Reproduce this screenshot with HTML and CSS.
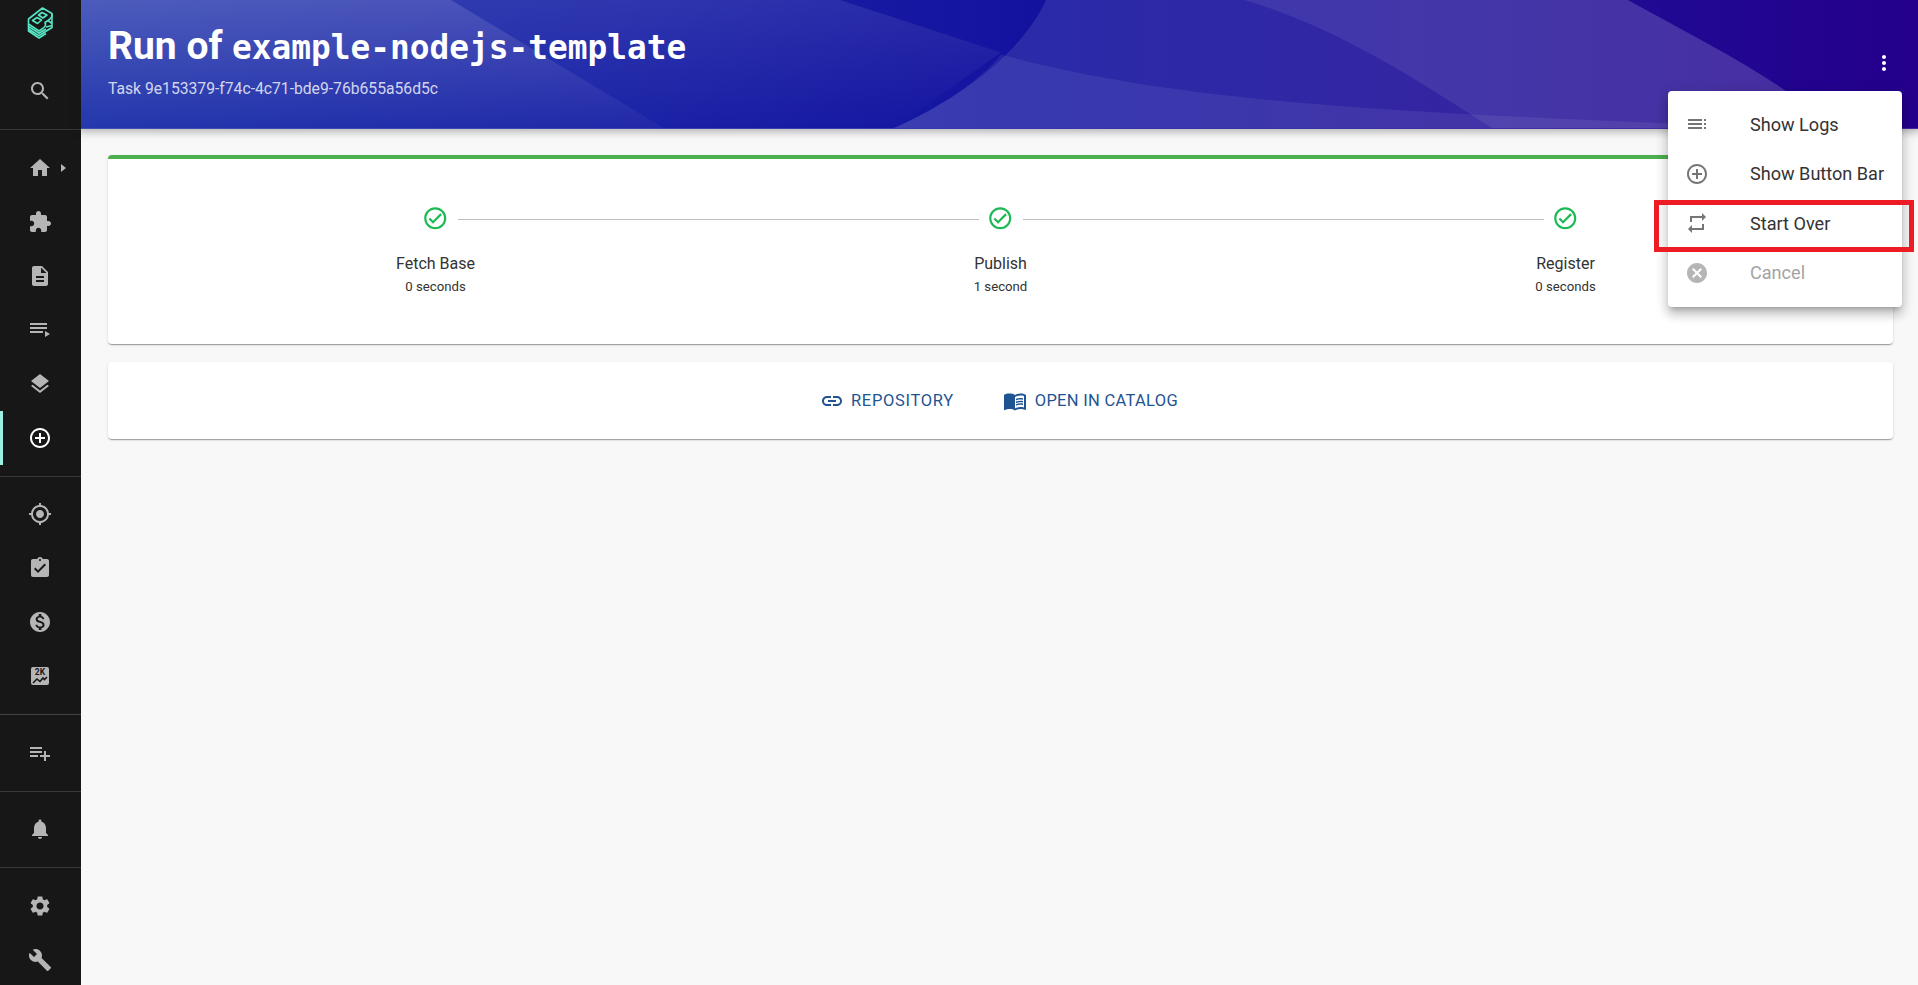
FILE: index.html
```html
<!DOCTYPE html>
<html lang="en">
<head>
  <meta charset="UTF-8">
  <title>Run of example-nodejs-template</title>
  <link rel="stylesheet" href="styles.css">
</head>
<body>
  <nav class="sidebar">
    <div class="logo">
      <svg width="27" height="33" viewBox="26 6 27 33" fill="none" stroke="#57e5c5" stroke-width="1.6" stroke-linejoin="round">
        <path d="M27.5 19 L41.5 8 L51 13.5 Q52 17 47 20.5 L44 22.5 Q46 26 41 29 L38 31 L27.5 24 Z"/>
        <path d="M37.5 15 L41 12.5 L46 15 L42 18 Z M31.5 20.5 L36 17.5 L40.5 20 L36.5 23.5 Z"/>
        <path d="M27.5 24 V31 L38 38 L45 33.5 M27.5 26.5 L38 33.2 L45 29 M27.5 29 L38 35.6 L45 31.3"/>
        <path d="M51 14 V27.5 L45 31.3 M47 20.5 L51 23.5 M45 27 L51 25.5"/>
      </svg>
    </div>
    <a class="nav-item"><svg viewBox="0 0 24 24"><path d="M15.5 14h-.79l-.28-.27C15.41 12.59 16 11.11 16 9.5 16 5.91 13.09 3 9.5 3S3 5.91 3 9.5 5.91 16 9.5 16c1.61 0 3.09-.59 4.23-1.57l.27.28v.79l5 4.99L20.49 19l-4.99-5zm-6 0C7.01 14 5 11.99 5 9.5S7.01 5 9.5 5 14 7.01 14 9.5 11.99 14 9.5 14z"/></svg></a>
    <div class="divider"></div>
    <a class="nav-item"><svg viewBox="0 0 24 24"><path d="M10 20v-6h4v6h5v-8h3L12 3 2 12h3v8z"/></svg><span class="caret"></span></a>
    <a class="nav-item"><svg viewBox="0 0 24 24"><path d="M20.5 11H19V7c0-1.1-.9-2-2-2h-4V3.5C13 2.12 11.88 1 10.5 1S8 2.12 8 3.5V5H4c-1.1 0-1.99.9-1.99 2v3.8H3.5c1.49 0 2.7 1.21 2.7 2.7s-1.21 2.7-2.7 2.7H2V20c0 1.1.9 2 2 2h3.8v-1.5c0-1.49 1.21-2.7 2.7-2.7 1.49 0 2.7 1.21 2.7 2.7V22H17c1.1 0 2-.9 2-2v-4h1.5c1.38 0 2.5-1.12 2.5-2.5S21.88 11 20.5 11z"/></svg></a>
    <a class="nav-item"><svg viewBox="0 0 24 24"><path d="M14 2H6c-1.1 0-1.99.9-1.99 2L4 20c0 1.1.89 2 1.99 2H18c1.1 0 2-.9 2-2V8l-6-6zm2 16H8v-2h8v2zm0-4H8v-2h8v2zm-3-5V3.5L18.5 9H13z"/></svg></a>
    <a class="nav-item"><svg viewBox="0 0 24 24"><path d="M19 9H2v2h17V9zm0-4H2v2h17V5zM2 15h13v-2H2v2zm15-2v6l5-3-5-3z"/></svg></a>
    <a class="nav-item"><svg viewBox="0 0 24 24"><path d="M11.99 18.54l-7.37-5.73L3 14.07l9 7 9-7-1.63-1.27-7.38 5.74zM12 16l7.36-5.73L21 9l-9-7-9 7 1.63 1.27L12 16z"/></svg></a>
    <a class="nav-item active"><svg viewBox="0 0 24 24"><path d="M13 7h-2v4H7v2h4v4h2v-4h4v-2h-4V7zm-1-5C6.48 2 2 6.48 2 12s4.48 10 10 10 10-4.48 10-10S17.52 2 12 2zm0 18c-4.41 0-8-3.59-8-8s3.59-8 8-8 8 3.59 8 8-3.59 8-8 8z"/></svg></a>
    <div class="divider tight"></div>
    <a class="nav-item"><svg viewBox="0 0 24 24"><path d="M12 8c-2.21 0-4 1.79-4 4s1.79 4 4 4 4-1.79 4-4-1.79-4-4-4zm8.94 3c-.46-4.17-3.77-7.48-7.94-7.94V1h-2v2.06C6.83 3.52 3.52 6.83 3.06 11H1v2h2.06c.46 4.17 3.77 7.48 7.94 7.94V23h2v-2.06c4.17-.46 7.48-3.77 7.94-7.94H23v-2h-2.06zM12 19c-3.87 0-7-3.13-7-7s3.13-7 7-7 7 3.13 7 7-3.13 7-7 7z"/></svg></a>
    <a class="nav-item"><svg viewBox="0 0 24 24"><path d="M19 3h-4.18C14.4 1.84 13.3 1 12 1c-1.3 0-2.4.84-2.82 2H5c-1.1 0-2 .9-2 2v14c0 1.1.9 2 2 2h14c1.1 0 2-.9 2-2V5c0-1.1-.9-2-2-2zm-7 0c.55 0 1 .45 1 1s-.45 1-1 1-1-.45-1-1 .45-1 1-1zm-2 14l-4-4 1.41-1.41L10 14.17l6.59-6.59L18 9l-8 8z"/></svg></a>
    <a class="nav-item"><svg viewBox="0 0 24 24"><path d="M12 2C6.48 2 2 6.48 2 12s4.48 10 10 10 10-4.48 10-10S17.52 2 12 2zm1.41 16.09V20h-2.67v-1.93c-1.71-.36-3.16-1.46-3.27-3.4h1.96c.1 1.05.82 1.87 2.65 1.87 1.96 0 2.4-.98 2.4-1.59 0-.83-.44-1.61-2.67-2.14-2.48-.6-4.18-1.62-4.18-3.67 0-1.72 1.39-2.84 3.11-3.21V4h2.67v1.95c1.86.45 2.79 1.86 2.85 3.39H14.3c-.05-1.11-.64-1.87-2.22-1.87-1.5 0-2.4.68-2.4 1.64 0 .84.65 1.39 2.67 1.91s4.18 1.39 4.18 3.91c-.01 1.83-1.38 2.83-3.12 3.16z"/></svg></a>
    <a class="nav-item"><svg viewBox="0 0 24 24"><rect x="3" y="3" width="18" height="18" rx="2"/><text class="score-text" x="12" y="11">2K</text><path class="score-line" d="M5 19l4-4 3 2.5 3-3.5 1.5 1.5L19 13"/></svg></a>
    <div class="divider thick"></div>
    <a class="nav-item"><svg viewBox="0 0 24 24"><path d="M14 10H2v2h12v-2zm0-4H2v2h12V6zm4 8v-4h-2v4h-4v2h4v4h2v-4h4v-2h-4zM2 16h8v-2H2v2z"/></svg></a>
    <div class="divider tight"></div>
    <a class="nav-item"><svg viewBox="0 0 24 24"><path d="M12 22c1.1 0 2-.9 2-2h-4c0 1.1.89 2 2 2zm6-6v-5c0-3.07-1.64-5.64-4.5-6.32V4c0-.83-.67-1.5-1.5-1.5s-1.5.67-1.5 1.5v.68C7.63 5.36 6 7.92 6 11v5l-2 2v1h16v-1l-2-2z"/></svg></a>
    <div class="divider"></div>
    <a class="nav-item"><svg viewBox="0 0 24 24"><path d="M19.14 12.94c.04-.3.06-.61.06-.94 0-.32-.02-.64-.07-.94l2.03-1.58c.18-.14.23-.41.12-.61l-1.92-3.32c-.12-.22-.37-.29-.59-.22l-2.39.96c-.5-.38-1.03-.7-1.62-.94l-.36-2.54c-.04-.24-.24-.41-.48-.41h-3.84c-.24 0-.43.17-.47.41l-.36 2.54c-.59.24-1.13.57-1.62.94l-2.39-.96c-.22-.08-.47 0-.59.22L2.74 8.87c-.12.21-.08.47.12.61l2.03 1.58c-.05.3-.09.63-.09.94s.02.64.07.94l-2.03 1.58c-.18.14-.23.41-.12.61l1.92 3.32c.12.22.37.29.59.22l2.39-.96c.5.38 1.03.7 1.62.94l.36 2.54c.05.24.24.41.48.41h3.84c.24 0 .44-.17.47-.41l.36-2.54c.59-.24 1.13-.56 1.62-.94l2.39.96c.22.08.47 0 .59-.22l1.92-3.32c.12-.22.07-.47-.12-.61l-2.01-1.58zM12 15.6c-1.98 0-3.6-1.62-3.6-3.6s1.62-3.6 3.6-3.6 3.6 1.62 3.6 3.6-1.62 3.6-3.6 3.6z"/></svg></a>
    <a class="nav-item"><svg viewBox="0 0 24 24"><path d="M22.7 19l-9.1-9.1c.9-2.3.4-5-1.5-6.9-2-2-5-2.4-7.4-1.3L9 6 6 9 1.6 4.7C.4 7.1.9 10.1 2.9 12.1c1.9 1.9 4.6 2.4 6.9 1.5l9.1 9.1c.4.4 1 .4 1.4 0l2.3-2.3c.5-.4.5-1.1.1-1.4z"/></svg></a>
  </nav>

  <main class="page">
    <header class="page-header">
      <!-- header artwork, coordinates are page px minus the 81px sidebar -->
      <svg class="header-art" viewBox="0 0 1837 129" preserveAspectRatio="none">
        <defs>
          <linearGradient id="fadeStrong" x1="0" y1="0" x2="0" y2="1">
            <stop offset="0" stop-color="#fff" stop-opacity=".13"/>
            <stop offset="1" stop-color="#fff" stop-opacity=".03"/>
          </linearGradient>
          <linearGradient id="fadeSoft" x1="0" y1="0" x2="0" y2="1">
            <stop offset="0" stop-color="#fff" stop-opacity=".09"/>
            <stop offset="1" stop-color="#fff" stop-opacity="0"/>
          </linearGradient>
        </defs>
        <path fill="url(#fadeSoft)" d="M0 0H759L920 53L813 129H0Z"/>
        <path fill="url(#fadeStrong)" d="M0 0H370L583 129H0Z"/>
        <path fill="#fff" fill-opacity=".1" d="M965 0C945 45 890 95 813 129H1760L1707 93C1660 60 1600 30 1547 0Z"/>
        <path fill="#fff" fill-opacity=".08" d="M1163 0C1260 28 1350 90 1411 129H1760L1707 93C1660 60 1600 30 1547 0Z"/>
        <path fill="#fff" fill-opacity=".07" d="M920 55C1100 105 1330 113 1600 125V129H813C860 108 900 80 920 55Z"/>
      </svg>
      <div class="header-text">
        <h1>Run of <code>example-nodejs-template</code></h1>
        <p>Task 9e153379-f74c-4c71-bde9-76b655a56d5c</p>
      </div>
      <button class="more-btn"><svg viewBox="0 0 24 24"><path d="M12 8c1.1 0 2-.9 2-2s-.9-2-2-2-2 .9-2 2 .9 2 2 2zm0 2c-1.1 0-2 .9-2 2s.9 2 2 2 2-.9 2-2-.9-2-2-2zm0 6c-1.1 0-2 .9-2 2s.9 2 2 2 2-.9 2-2-.9-2-2-2z"/></svg></button>
    </header>

    <div class="content">
      <section class="card stepper">
        <div class="step">
          <div class="step-head">
            <svg viewBox="0 0 24 24"><path d="M12 2C6.48 2 2 6.48 2 12s4.48 10 10 10 10-4.48 10-10S17.52 2 12 2zm0 18c-4.41 0-8-3.59-8-8s3.59-8 8-8 8 3.59 8 8-3.59 8-8 8zm4.59-12.42L10 14.17l-2.59-2.58L6 13l4 4 8-8z"/></svg>
          </div>
          <div class="step-name">Fetch Base</div>
          <div class="step-time">0 seconds</div>
        </div>
        <div class="step">
          <div class="step-head">
            <svg viewBox="0 0 24 24"><path d="M12 2C6.48 2 2 6.48 2 12s4.48 10 10 10 10-4.48 10-10S17.52 2 12 2zm0 18c-4.41 0-8-3.59-8-8s3.59-8 8-8 8 3.59 8 8-3.59 8-8 8zm4.59-12.42L10 14.17l-2.59-2.58L6 13l4 4 8-8z"/></svg>
          </div>
          <div class="step-name">Publish</div>
          <div class="step-time">1 second</div>
        </div>
        <div class="step">
          <div class="step-head">
            <svg viewBox="0 0 24 24"><path d="M12 2C6.48 2 2 6.48 2 12s4.48 10 10 10 10-4.48 10-10S17.52 2 12 2zm0 18c-4.41 0-8-3.59-8-8s3.59-8 8-8 8 3.59 8 8-3.59 8-8 8zm4.59-12.42L10 14.17l-2.59-2.58L6 13l4 4 8-8z"/></svg>
          </div>
          <div class="step-name">Register</div>
          <div class="step-time">0 seconds</div>
        </div>
      </section>

      <section class="card links">
        <a class="link-btn repo"><svg viewBox="0 0 24 24"><path d="M3.9 12c0-1.71 1.39-3.1 3.1-3.1h4V7H7c-2.76 0-5 2.24-5 5s2.24 5 5 5h4v-1.9H7c-1.71 0-3.1-1.39-3.1-3.1zM8 13h8v-2H8v2zm9-6h-4v1.9h4c1.71 0 3.1 1.39 3.1 3.1s-1.39 3.1-3.1 3.1h-4V17h4c2.76 0 5-2.24 5-5s-2.24-5-5-5z"/></svg>Repository</a>
        <a class="link-btn"><svg viewBox="0 0 24 24"><path d="M21 5c-1.11-.35-2.33-.5-3.5-.5-1.95 0-4.05.4-5.5 1.5-1.45-1.1-3.55-1.5-5.5-1.5S2.45 4.9 1 6v14.65c0 .25.25.5.5.5.1 0 .15-.05.25-.05C3.1 20.45 5.05 20 6.5 20c1.95 0 4.05.4 5.5 1.5 1.35-.85 3.8-1.5 5.5-1.5 1.65 0 3.35.3 4.75 1.05.1.05.15.05.25.05.25 0 .5-.25.5-.5V6c-.6-.45-1.25-.75-2-1zm0 13.5c-1.1-.35-2.3-.5-3.5-.5-1.7 0-4.15.65-5.5 1.5V8c1.35-.85 3.8-1.5 5.5-1.5 1.2 0 2.4.15 3.5.5v11.5z"/><path d="M17.5 10.5c.88 0 1.73.09 2.5.26V9.24c-.79-.15-1.64-.24-2.5-.24-1.7 0-3.24.29-4.5.83v1.66c1.13-.64 2.7-.99 4.5-.99zM13 12.49v1.66c1.13-.64 2.7-.99 4.5-.99.88 0 1.73.09 2.5.26V11.9c-.79-.15-1.64-.24-2.5-.24-1.7 0-3.24.3-4.5.83zM17.5 14.33c-1.7 0-3.24.29-4.5.83v1.66c1.13-.64 2.7-.99 4.5-.99.88 0 1.73.09 2.5.26v-1.52c-.79-.16-1.64-.24-2.5-.24z"/></svg>Open in catalog</a>
      </section>
    </div>
  </main>

  <ul class="menu">
    <li class="menu-item"><svg viewBox="0 0 24 24"><path d="M3 9h14V7H3v2zm0 4h14v-2H3v2zm0 4h14v-2H3v2zm16 0h2v-2h-2v2zm0-10v2h2V7h-2zm0 6h2v-2h-2v2z"/></svg>Show Logs</li>
    <li class="menu-item"><svg viewBox="0 0 24 24"><path d="M13 7h-2v4H7v2h4v4h2v-4h4v-2h-4V7zm-1-5C6.48 2 2 6.48 2 12s4.48 10 10 10 10-4.48 10-10S17.52 2 12 2zm0 18c-4.41 0-8-3.59-8-8s3.59-8 8-8 8 3.59 8 8-3.59 8-8 8z"/></svg>Show Button Bar</li>
    <li class="menu-item"><svg viewBox="0 0 24 24"><path d="M7 7h10v3l4-4-4-4v3H5v6h2V7zm10 10H7v-3l-4 4 4 4v-3h12v-6h-2v4z"/></svg>Start Over</li>
    <li class="menu-item disabled"><svg viewBox="0 0 24 24"><path d="M12 2C6.47 2 2 6.47 2 12s4.47 10 10 10 10-4.47 10-10S17.53 2 12 2zm5 13.59L15.59 17 12 13.41 8.41 17 7 15.59 10.59 12 7 8.41 8.41 7 12 10.59 15.59 7 17 8.41 13.41 12 17 15.59z"/></svg>Cancel</li>
  </ul>
  <div class="highlight"></div>
</body>
</html>
```

FILE: styles.css
```css
html, body {
  height: 100%;
}
body {
  margin: 0;
  display: flex;
  overflow: hidden;
  font-family: Roboto, "Liberation Sans", sans-serif;
  background-color: #f8f8f8;
  color: #333;
}

/* sidebar */
.sidebar {
  width: 81px;
  flex-shrink: 0;
  height: 100vh;
  overflow: hidden;
  background-color: #171717;
  display: flex;
  flex-direction: column;
}
.logo {
  height: 64px;
  flex-shrink: 0;
  display: flex;
  justify-content: center;
  padding: 6px 1px 0 0;
  box-sizing: border-box;
}
.logo svg {
  display: block;
}
.nav-item {
  height: 54px;
  flex-shrink: 0;
  display: flex;
  align-items: center;
  justify-content: center;
  padding-right: 1px;
  position: relative;
  box-sizing: border-box;
}
.nav-item svg {
  width: 24px;
  height: 24px;
  fill: #b5b5b5;
}
.nav-item.active {
  border-left: 3px solid #9bf0e1;
  padding-right: 4px;
}
.nav-item.active svg {
  fill: #fff;
}
.score-text {
  fill: #171717;
  font-size: 8.5px;
  font-weight: 700;
  text-anchor: middle;
}
.score-line {
  fill: none;
  stroke: #171717;
  stroke-width: 1.6;
}
.caret {
  position: absolute;
  left: 61px;
  top: 23px;
  border-left: 5px solid #b5b5b5;
  border-top: 4px solid transparent;
  border-bottom: 4px solid transparent;
}
.divider {
  height: 1px;
  flex-shrink: 0;
  margin: 11px 0;
  background-color: #383838;
}
.divider.tight {
  margin-bottom: 10px;
}
.divider.thick {
  background-color: #444;
}

/* header */
.page {
  flex: 1;
  min-width: 0;
}
.page-header {
  height: 129px;
  box-sizing: border-box;
  padding: 27px;
  position: relative;
  display: flex;
  justify-content: space-between;
  background: linear-gradient(90deg, #1d31aa 0%, #1a22a6 30%, #13129f 52%, #1f0c96 80%, #24008c 100%);
  border-bottom: 1px solid rgba(255, 255, 255, 0.15);
  box-shadow: 0 0 8px 3px rgba(20, 20, 20, 0.3);
}
.header-art {
  position: absolute;
  left: 0;
  top: 0;
  width: 100%;
  height: 100%;
}
.header-text {
  position: relative;
  color: #fff;
}
.page-header h1 {
  margin: 0;
  font-size: 39px;
  line-height: 38px;
  font-weight: 700;
}
.page-header code {
  font-family: "DejaVu Sans Mono", monospace;
  font-size: 32.8px;
}
.page-header p {
  margin: 13px 0 0;
  font-size: 15.7px;
  line-height: 18px;
  color: rgba(255, 255, 255, 0.8);
}
.more-btn {
  position: relative;
  padding: 0;
  border: none;
  background: none;
  width: 24px;
  height: 24px;
  margin: 24px -5px 0 0;
}
.more-btn svg {
  width: 24px;
  height: 24px;
  fill: #fff;
  display: block;
}

/* cards */
.content {
  padding: 26px 25px 0 27px;
}
.card {
  background-color: #fff;
  border-radius: 4px;
  box-shadow: 0 2px 1px -1px rgba(0, 0, 0, 0.2), 0 1px 1px 0 rgba(0, 0, 0, 0.14), 0 1px 3px 0 rgba(0, 0, 0, 0.12);
}
.stepper {
  height: 189px;
  box-sizing: border-box;
  border-top: 4px solid #4caf50;
  padding: 46px 45px 0;
  display: flex;
}
.step {
  flex: 1;
  text-align: center;
}
.step-head {
  height: 26px;
  position: relative;
}
.step-head svg {
  width: 26.5px;
  height: 26.5px;
  fill: #1db954;
  display: block;
  margin: 0 auto;
}
.step:not(:last-child) .step-head::after {
  content: "";
  position: absolute;
  left: calc(50% + 22px);
  right: calc(-50% + 22px);
  top: 14px;
  height: 1px;
  background-color: #bdbdbd;
}
.step-name {
  margin-top: 21px;
  font-size: 16px;
  line-height: 24px;
}
.step-time {
  font-size: 13.2px;
  line-height: 20px;
  margin-top: 1px;
}
.links {
  margin-top: 18px;
  height: 77px;
  box-sizing: border-box;
  padding-right: 3px;
  display: flex;
  justify-content: center;
  align-items: center;
  gap: 49px;
}
.link-btn {
  display: flex;
  align-items: center;
  gap: 8px;
  font-size: 16.5px;
  letter-spacing: 0.3px;
  text-transform: uppercase;
  color: #1f5493;
}
.link-btn.repo {
  gap: 7px;
  letter-spacing: 0.67px;
}
.link-btn svg {
  width: 24px;
  height: 24px;
  fill: #1f5493;
}

/* popup menu */
.menu {
  position: absolute;
  left: 1668px;
  top: 91px;
  width: 234px;
  box-sizing: border-box;
  margin: 0;
  padding: 8.5px 0 9.5px;
  list-style: none;
  background-color: #fff;
  border-radius: 4px;
  box-shadow: 0 5px 5px -3px rgba(0, 0, 0, 0.2), 0 8px 10px 1px rgba(0, 0, 0, 0.14), 0 3px 14px 2px rgba(0, 0, 0, 0.12);
}
.menu-item {
  height: 49.5px;
  display: flex;
  align-items: center;
  padding-left: 17px;
  font-size: 18.1px;
  color: #333;
  white-space: nowrap;
}
.menu-item svg {
  width: 24px;
  height: 24px;
  fill: #757575;
  margin-right: 41px;
  flex-shrink: 0;
}
.menu-item.disabled {
  color: #a3a3a3;
}
.menu-item.disabled svg {
  fill: #b5b5b5;
}
.highlight {
  position: absolute;
  left: 1654px;
  top: 200px;
  width: 260px;
  height: 52px;
  box-sizing: border-box;
  border: 5px solid #ed1c24;
}
```
